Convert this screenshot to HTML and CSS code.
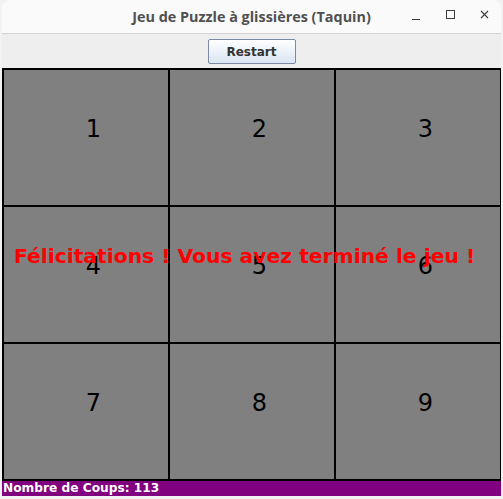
FILE: index.html
```html
<!DOCTYPE html>
<html lang="fr">
<head>
<meta charset="utf-8">
<title>Jeu de Puzzle à glissières (Taquin)</title>
<link rel="stylesheet" href="styles.css">
</head>
<body>
<div class="window">
  <div class="titlebar">
    <div class="title">Jeu de Puzzle à glissières (Taquin)</div>
    <div class="controls">
      <svg class="ctl" width="12" height="12" viewBox="0 0 12 12"><path d="M1 10.5H9" stroke="#3c3c3c" stroke-width="1" fill="none"/></svg>
      <svg class="ctl" width="12" height="12" viewBox="0 0 12 12"><rect x="1.5" y="1.5" width="8" height="8" stroke="#3c3c3c" stroke-width="1" fill="none"/></svg>
      <svg class="ctl" width="12" height="12" viewBox="0 0 12 12"><path d="M2 2L9 9M9 2L2 9" stroke="#3c3c3c" stroke-width="1.1" fill="none"/></svg>
    </div>
  </div>
  <div class="toolbar">
    <button class="restart">Restart</button>
  </div>
  <div class="board">
    <div class="grid">
      <div class="cell">1</div>
      <div class="cell">2</div>
      <div class="cell">3</div>
      <div class="cell">4</div>
      <div class="cell">5</div>
      <div class="cell">6</div>
      <div class="cell">7</div>
      <div class="cell">8</div>
      <div class="cell">9</div>
    </div>
    <div class="message">Félicitations ! Vous avez terminé le jeu !</div>
  </div>
  <div class="status">Nombre de Coups: 113</div>
</div>
</body>
</html>
```

FILE: styles.css
```css
html, body {
  margin: 0;
  padding: 0;
}
body {
  background: #f2f2f2;
  width: 503px;
  height: 499px;
  overflow: hidden;
  font-family: "DejaVu Sans", sans-serif;
}
.window {
  margin-left: 2px;
  width: 499px;
  background: #eeeeee;
  border-radius: 8px 8px 0 0;
  overflow: hidden;
}
.titlebar {
  position: relative;
  height: 33px;
  background: #fafafa;
  border-bottom: 1px solid #d3d3d3;
  display: flex;
  align-items: center;
  justify-content: center;
}
.title {
  font-family: "Open Sans", sans-serif;
  font-weight: 700;
  font-size: 14.4px;
  color: #505050;
  margin-top: -1px;
}
.controls {
  position: absolute;
  right: 10px;
  top: 9px;
  display: flex;
  gap: 22px;
}
.ctl {
  display: block;
}
.toolbar {
  height: 34px;
  display: flex;
  justify-content: center;
  align-items: flex-start;
  padding-top: 5px;
  box-sizing: border-box;
}
.restart {
  width: 88px;
  height: 25px;
  border: 1px solid #7a8aa3;
  border-radius: 2px;
  background: linear-gradient(#ffffff, #d9e5f2);
  font-family: "DejaVu Sans", sans-serif;
  font-weight: 700;
  font-size: 12px;
  color: #333333;
  padding: 0;
}
.board {
  position: relative;
}
.grid {
  display: grid;
  grid-template-columns: repeat(3, 164px);
  grid-template-rows: repeat(3, 135px);
  gap: 2px;
  padding: 2px;
  background: #000000;
  width: 500px;
  box-sizing: border-box;
}
.cell {
  background: #808080;
  text-align: center;
  font-size: 24px;
  line-height: 24px;
  padding-top: 47px;
  padding-left: 15px;
  box-sizing: border-box;
  color: #000000;
}
.message {
  position: absolute;
  left: 12px;
  top: 176px;
  font-weight: 700;
  font-size: 20.3px;
  color: #ff0000;
  white-space: nowrap;
}
.status {
  height: 15px;
  background: #800080;
  color: #ffffff;
  font-weight: 700;
  font-size: 12.2px;
  line-height: 15px;
  padding-left: 1px;
}
```
